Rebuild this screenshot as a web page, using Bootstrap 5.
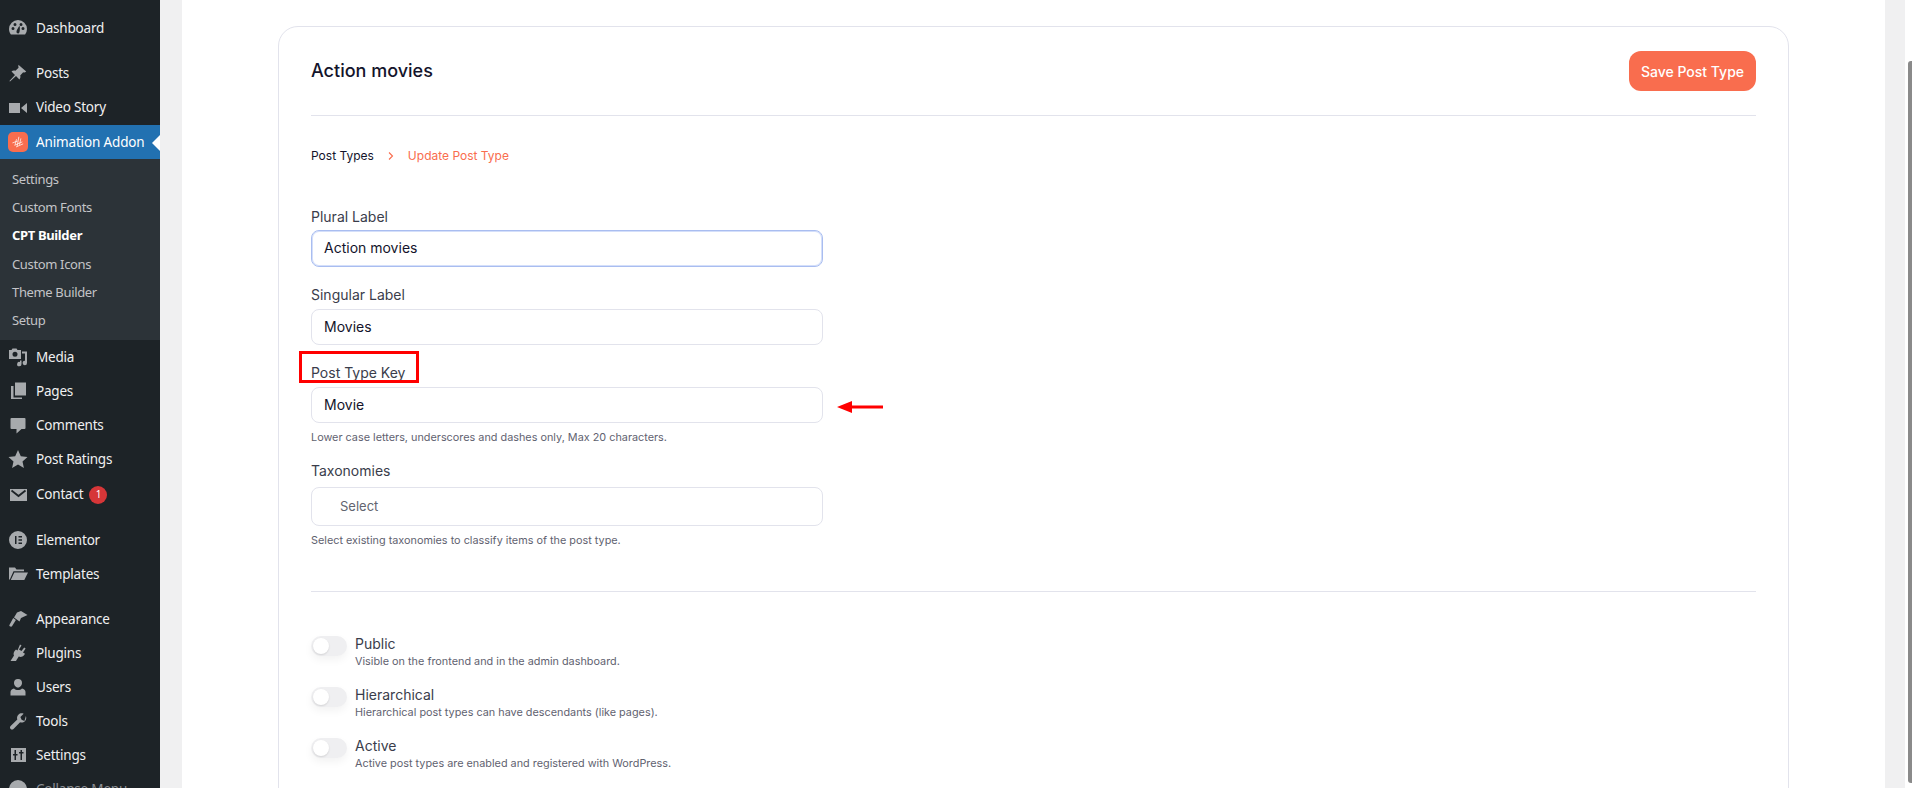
<!DOCTYPE html>
<html lang="en"><head><meta charset="utf-8"><title>CPT Builder</title>
<link href="https://cdn.jsdelivr.net/npm/bootstrap@5.3.0/dist/css/bootstrap.min.css" rel="stylesheet">
<style>
html,body{height:788px;overflow:hidden;background:#f0f0f1}
.shell{height:788px;overflow:hidden}
.wpside{width:160px;flex:none;background:#1d2327;padding-top:11px;font-family:"Noto Sans","Open Sans",sans-serif;font-size:13.5px;color:#f0f0f1;letter-spacing:-.2px}
.mi{height:34px;display:flex;align-items:center;position:relative}
.mi.vid{height:35px}
.mi.tall{height:35px;padding-top:2px}
.mi svg,.mi .ai{width:20px;height:20px;margin-left:8px;margin-right:8px;flex:none;fill:#a7aaad}
.sep{height:11px}
.sep.wide{height:12px}
.mi.cur{background:#2271b1;color:#fff;letter-spacing:-.15px}
.mi.cur::after{content:"";position:absolute;right:0;top:10px;border:8px solid transparent;border-right-color:#fff;border-left:0}
.ai{background:#f96d4e;border-radius:5px;display:flex;align-items:center;justify-content:center}
.submenu{background:#2c3338;height:181px;padding-top:6.500px;font-size:13px;color:#c3c4c7;letter-spacing:-.35px}
.submenu div{height:28.3px;padding-left:12px;display:flex;align-items:center}
.submenu .on{color:#fff;font-weight:700}
.cnt{background:#d63638;color:#fff;border-radius:50%;width:18px;height:18px;font-size:10px;display:inline-flex;align-items:center;justify-content:center;margin-left:6px}
.dim{color:#8c8f94}
.mainwrap{flex:1;padding-left:22px;padding-right:20px;min-width:0}
.panel{background:#fff;height:788px;padding:26px 96px 0;font-family:Inter,sans-serif;overflow:hidden}
.cptcard{border:1px solid #e2e3ec;border-radius:20px;height:800px;padding:20px 32px 0;background:#fff}
.headrow{height:69px;border-bottom:1px solid #e2e3ec;padding-top:4px}
.ttl{font-size:18px;font-weight:500;color:#14142b;margin:0;line-height:40px}
.savebtn{background:#f96d4e;color:#fff;border:0;border-radius:12px;font-size:14px;font-weight:500;height:40px;width:127px;padding:0}
.crumbs{font-size:12px;color:#14142b;margin-top:32px;height:16px;line-height:16px}
.crumbs .cr2{color:#f96d4e}
.crumbsep{margin:0 10px}
.fieldset{width:512px;margin-top:44px}
.lbl{font-size:14px;color:#3a3d4b;line-height:17px;height:17px;margin:0 0 6px}
.inp{display:block;width:100%;height:36px;border:1px solid #e2e3ec;border-radius:8px;padding:0 12px;font-size:14px;font-weight:400;color:#14142b;line-height:34px;font-family:Inter,sans-serif;background:#fff;margin-bottom:19px}
.inp.foc{border-color:#a9bdf0;box-shadow:0 0 0 1px #d4dffa inset;height:37px;margin-top:-1px}
.hintx{font-size:10.85px;color:#5f6270;line-height:14px;margin:7px 0 18px}
.lbltax{margin-bottom:8px}
.inp.sel{height:39px;line-height:37px;padding-left:28px;color:#62646f;font-size:13px;margin:0}
.lblkey{position:relative}
.redbox{position:absolute;left:-12px;top:-13px;width:120px;height:32px;border:3px solid #f00;pointer-events:none}
.redarrow{position:absolute;left:526px;top:36px}
.rule{height:1px;background:#e2e3ec;margin-top:44px}
.togs{margin-top:44px}
.togrow{height:51px;gap:8px}
.sw{width:36px;height:20px;border-radius:10px;background:#efeff1;box-shadow:0 4px 8px rgba(0,0,0,.05);position:relative;flex:none}
.sw::after{content:"";position:absolute;left:2px;top:2px;width:16px;height:16px;border-radius:50%;background:#fff;box-shadow:0 1px 2px rgba(0,0,0,.12)}
.tname{font-size:14px;color:#3a3d4b;line-height:16px}
.tdesc{font-size:10.85px;color:#5f6270;line-height:14px;margin-top:2px}
.scroller{width:7px;flex:none;background:#fff;padding:61px 0 5px 3px}
.scroller div{height:100%;background:#8a8a8a;border-radius:3px 0 0 3px}
</style></head><body>
<div class="shell d-flex">
<nav class="wpside">
<div class="mi"><svg viewBox="0 0 20 20"><path d="M10 2a9 9 0 0 0-9 9c0 2 .7 4 1.900 5.500h14.200A9 9 0 0 0 19 11a9 9 0 0 0-9-9zM5 12a1.500 1.500 0 1 1 0-3 1.500 1.500 0 0 1 0 3zm2-4a1.500 1.500 0 1 1 0-3 1.500 1.500 0 0 1 0 3zm3.500 7.500a1.800 1.800 0 0 1-2-2c0-1 2.500-5.500 3-5.500s.5 5-.1 6.500zM13 8a1.500 1.500 0 1 1 0-3 1.500 1.500 0 0 1 0 3zm2 4a1.500 1.500 0 1 1 0-3 1.500 1.500 0 0 1 0 3z" fill-rule="evenodd"/></svg>Dashboard</div>
<div class="sep"></div>
<div class="mi"><svg viewBox="0 0 20 20"><path d="M10.400 1.800 18.200 8.500c-1 .9-2 1.100-3 .7l-3 3.300c.5 1.400.2 2.800-.8 3.900L8 12.900 2 18.400l-.6-.5L7 12 3.500 8.500C4.500 7.500 6 7.200 7.400 7.800l3.200-3c-.4-1-.2-2.100-.2-3z"/></svg>Posts</div>
<div class="mi vid"><svg viewBox="0 0 20 20"><path d="M1 5h11v10H1zM13 10l6-5v10z"/></svg>Video Story</div>
<div class="mi cur"><span class="ai"><svg viewBox="0 0 20 20" style="margin:0;width:16px;height:16px" fill="none"><path d="M6.500 13 8 7M9 15l2-11M12 13l1.500-7M3.500 11l5.500-2M6 14l9-4M8 16l8-3.500" stroke="#fff" stroke-width=".9" stroke-linecap="round"/></svg></span>Animation Addon</div>
<div class="submenu"><div>Settings</div><div>Custom Fonts</div><div class="on">CPT Builder</div><div>Custom Icons</div><div>Theme Builder</div><div>Setup</div></div>
<div class="mi"><svg viewBox="0 0 20 20"><path fill-rule="evenodd" d="M1 3h2.500l1-1.500h4L9.500 3H13v9H1zM7 4.800a2.500 2.500 0 1 0 0 5 2.500 2.500 0 0 0 0-5z"/><path d="M14 4.500h5v11.500a2.200 2.200 0 1 1-2-2.200V6.500h-3zM12 13.500h1.500V17a2.200 2.200 0 1 1-1.500-2z"/></svg>Media</div>
<div class="mi"><svg viewBox="0 0 20 20"><path d="M7 1.500h11v13H7z"/><path d="M3 5h2.500v11.500H14V18H3z"/></svg>Pages</div>
<div class="mi"><svg viewBox="0 0 20 20"><path d="M3.500 3h13a1 1 0 0 1 1 1v9a1 1 0 0 1-1 1h-3L8.500 18.500V14h-5a1 1 0 0 1-1-1V4a1 1 0 0 1 1-1z"/></svg>Comments</div>
<div class="mi"><svg viewBox="0 0 20 20"><path d="m10 1 2.800 6.200 6.700.7-5 4.500 1.400 6.600L10 15.600 4.100 19l1.400-6.600-5-4.500 6.700-.7z"/></svg>Post Ratings</div>
<div class="mi tall"><svg viewBox="0 0 20 20"><rect x="2" y="4" width="17" height="12"/><path d="m3.500 5.500 7 5.500 7-5.500" fill="none" stroke="#1d2327" stroke-width="1.800"/></svg>Contact<span class="cnt">1</span></div>
<div class="sep wide"></div>
<div class="mi"><svg viewBox="0 0 20 20"><path fill-rule="evenodd" d="M10 1a9 9 0 1 0 0 18 9 9 0 0 0 0-18zM7 6h1.500v8H7zm3.500 0H14v1.500h-3.500zm0 3.200H14v1.500h-3.500zm0 3.300H14V14h-3.500z"/></svg>Elementor</div>
<div class="mi"><svg viewBox="0 0 20 20"><path d="M1 3.500h6l1.500 2H16v1.800H5.500L1.800 15.500H1zM6.300 8.500H20l-3.700 7.500H2.800z"/></svg>Templates</div>
<div class="sep"></div>
<div class="mi"><svg viewBox="0 0 20 20"><path d="M9 3.500 13 2l6.500 4-6.500 3-1.500 3.500-5.500-4zM5.200 9l2.700 2-3.900 6.300c-.6.900-3 .1-2.700-1z"/></svg>Appearance</div>
<div class="mi"><svg viewBox="0 0 20 20"><path d="m12 1.500 1.500 1-2.500 4 2.500 1.600 2.700-3.700 1.400 1L15 9.500l2 1.300-1 1.500c-1.500 1.700-3.600 1.900-5.200 1.200L8.500 17l-.5 1H2.500l3.500-5.500c-.7-1.500-.5-3.300.8-4.800L8 6.500l1.500 1z"/></svg>Plugins</div>
<div class="mi"><svg viewBox="0 0 20 20"><path d="M10 2a4 4 0 0 1 4 4c0 2-1.500 4.500-4 4.500S6 8 6 6a4 4 0 0 1 4-4zM2.500 15c0-2 1.500-3 3.500-3.500 1 1 2.500 1.500 4 1.500s3-.5 4-1.500c2 .5 3.500 1.500 3.500 3.500v3.500h-15z"/></svg>Users</div>
<div class="mi"><svg viewBox="0 0 20 20"><path d="M17.900 5c.7 1.700.4 3.800-1 5.200-1.300 1.300-3.200 1.700-4.800 1.100L5.500 18c-.8.800-2.100.8-2.900 0s-.8-2.100 0-2.900l6.700-6.600c-.6-1.600-.2-3.500 1.100-4.800 1.400-1.400 3.500-1.700 5.200-1l-3.200 3.200 1.200 2.800 2.800 1.200z"/></svg>Tools</div>
<div class="mi"><svg viewBox="0 0 20 20"><path fill-rule="evenodd" d="M3 3h15v14H3zM6.500 5v4H5v1.500h1.500V15H8v-4.500h1.500V9H8V5zM12.500 5v2H11v1.500h1.500V15H14V8.500h1.500V7H14V5z"/></svg>Settings</div>
<div class="mi dim"><svg viewBox="0 0 20 20"><circle cx="10" cy="10" r="9"/></svg>Collapse Menu</div>
</nav>
<div class="mainwrap"><div class="panel"><section class="cptcard">
<div class="headrow d-flex justify-content-between align-items-start"><h1 class="ttl">Action movies</h1><button class="savebtn" type="button">Save Post Type</button></div>
<div class="crumbs d-flex align-items-center"><span>Post Types</span><svg class="crumbsep" width="14" height="14" viewBox="0 0 14 14" fill="none" stroke="#f96d4e" stroke-width="1.100"><path d="m5 3.500 3.500 3.500L5 10.500"/></svg><span class="cr2">Update Post Type</span></div>
<div class="fieldset position-relative">
<p class="lbl">Plural Label</p><div class="inp foc">Action movies</div>
<p class="lbl">Singular Label</p><div class="inp">Movies</div>
<div class="lblkey"><p class="lbl">Post Type Key</p><div class="redbox"></div><svg class="redarrow" width="46" height="14" viewBox="0 0 46 14"><path d="M0 7 15 1v4.500h31v3H15V13z" fill="#f00"/></svg></div>
<div class="inp mb-0">Movie</div><p class="hintx">Lower case letters, underscores and dashes only, Max 20 characters.</p>
<p class="lbl lbltax">Taxonomies</p><div class="inp sel">Select</div><p class="hintx mb-0">Select existing taxonomies to classify items of the post type.</p>
</div>
<div class="rule"></div>
<div class="togs">
<div class="togrow d-flex"><span class="sw"></span><div><div class="tname">Public</div><div class="tdesc">Visible on the frontend and in the admin dashboard.</div></div></div>
<div class="togrow d-flex"><span class="sw"></span><div><div class="tname">Hierarchical</div><div class="tdesc">Hierarchical post types can have descendants (like pages).</div></div></div>
<div class="togrow d-flex"><span class="sw"></span><div><div class="tname">Active</div><div class="tdesc">Active post types are enabled and registered with WordPress.</div></div></div>
</div>
</section></div></div>
<div class="scroller"><div></div></div>
</div>
<script src="https://cdn.jsdelivr.net/npm/bootstrap@5.3.0/dist/js/bootstrap.bundle.min.js"></script>
</body></html>
